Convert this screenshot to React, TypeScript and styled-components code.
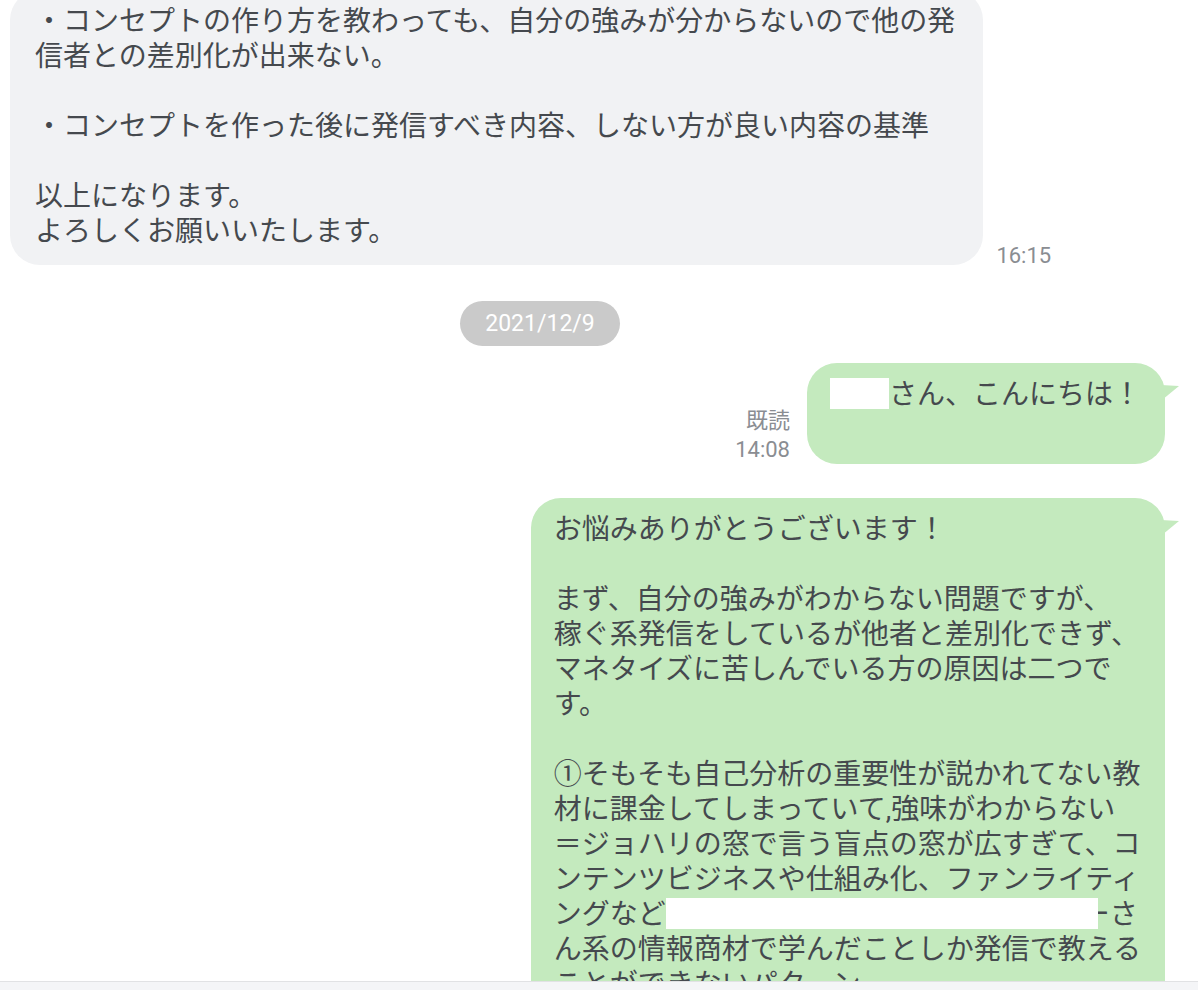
import React from "react";
import styled, { createGlobalStyle } from "styled-components";

const GlobalStyle = createGlobalStyle`
  html, body {
    margin: 0;
    padding: 0;
    background: #ffffff;
    overflow: hidden;
  }
  body {
    font-family: Roboto, "Noto Sans CJK JP", sans-serif;
  }
`;

const Page = styled.div`
  width: 1198px;
  height: 990px;
  position: relative;
  overflow: hidden;
  background: #ffffff;
`;

const ChatLog = styled.div`
  display: flex;
  flex-direction: column;
  margin-top: -10px;
`;

const Row = styled.div<{ $out?: boolean }>`
  display: flex;
  align-items: flex-end;
  justify-content: ${(p) => (p.$out ? "flex-end" : "flex-start")};
  gap: ${(p) => (p.$out ? "17px" : "13px")};
  padding: ${(p) => (p.$out ? "0 33px 0 0" : "0 0 0 10px")};
`;

const Bubble = styled.div<{ $out?: boolean }>`
  position: relative;
  background: ${(p) => (p.$out ? "#c4eabe" : "#f1f2f4")};
  color: #45494e;
  font-family: Roboto, "Noto Sans CJK JP", sans-serif;
  font-size: 28px;
  line-height: 35px;
  white-space: pre-wrap;
  border-radius: 30px;
  padding: ${(p) => (p.$out ? "14px 24px 17px 23px" : "14px 28px 16px 25px")};
`;

const Tail = styled.svg`
  position: absolute;
  top: 22px;
  right: -14px;
  width: 18px;
  height: 16px;
`;

const Meta = styled.div<{ $out?: boolean }>`
  display: flex;
  flex-direction: column;
  align-items: ${(p) => (p.$out ? "flex-end" : "flex-start")};
  font-family: Roboto, "Noto Sans CJK JP", sans-serif;
  font-size: 22px;
  line-height: 29px;
  color: #8a8d92;
  margin-bottom: ${(p) => (p.$out ? "0" : "-5px")};
`;

const DateRow = styled.div`
  width: 1080px;
  display: flex;
  justify-content: center;
  margin: 36px 0 17px;
`;

const DatePill = styled.div`
  background: #cacaca;
  color: #ffffff;
  font-family: Roboto, "Noto Sans CJK JP", sans-serif;
  font-size: 23px;
  height: 45px;
  line-height: 45px;
  padding: 0 25px;
  border-radius: 23px;
`;

const Redact = styled.span<{ $w: number; $overlap?: number }>`
  display: inline-block;
  position: relative;
  z-index: 1;
  width: ${(p) => p.$w}px;
  height: 31px;
  vertical-align: -5px;
  background: #ffffff;
  margin-right: ${(p) => -(p.$overlap ?? 0)}px;
`;

const Gap = styled.div<{ $h: number }>`
  height: ${(p) => p.$h}px;
`;

const BottomBar = styled.div`
  position: absolute;
  left: 0;
  right: 0;
  bottom: 0;
  height: 8px;
  background: #f4f5f7;
  border-top: 1px solid #e1e2e4;
`;

const GreenTail = () => (
  <Tail viewBox="0 0 18 16">
    <path d="M0 0 L18 1 L1 15 Z" fill="#c4eabe" />
  </Tail>
);

export default function App() {
  return (
    <Page>
      <GlobalStyle />
      <ChatLog>
        <Row>
          <Bubble>
            {"・コンセプトの作り方を教わっても、自分の強みが分からないので他の発\n信者との差別化が出来ない。\n\n・コンセプトを作った後に発信すべき内容、しない方が良い内容の基準\n\n以上になります。\nよろしくお願いいたします。"}
          </Bubble>
          <Meta>16:15</Meta>
        </Row>

        <DateRow>
          <DatePill>2021/12/9</DatePill>
        </DateRow>

        <Row $out>
          <Meta $out>
            <span>既読</span>
            <span>14:08</span>
          </Meta>
          <Bubble $out>
            <Redact $w={59} />
            {"さん、こんにちは！\n\u00a0"}
            <GreenTail />
          </Bubble>
        </Row>

        <Gap $h={34} />

        <Row $out>
          <Bubble $out>
            {"お悩みありがとうございます！\n\nまず、自分の強みがわからない問題ですが、\n稼ぐ系発信をしているが他者と差別化できず、\nマネタイズに苦しんでいる方の原因は二つで\nす。\n\n①そもそも自己分析の重要性が説かれてない教\n材に課金してしまっていて,強味がわからない\n＝ジョハリの窓で言う盲点の窓が広すぎて、コ\nンテンツビジネスや仕組み化、ファンライティ\nングなど"}
            <Redact $w={432} $overlap={16} />
            {"ーさ\nん系の情報商材で学んだことしか発信で教える\nことができないパターン\n\n"}
            <GreenTail />
          </Bubble>
        </Row>
      </ChatLog>
      <BottomBar />
    </Page>
  );
}
